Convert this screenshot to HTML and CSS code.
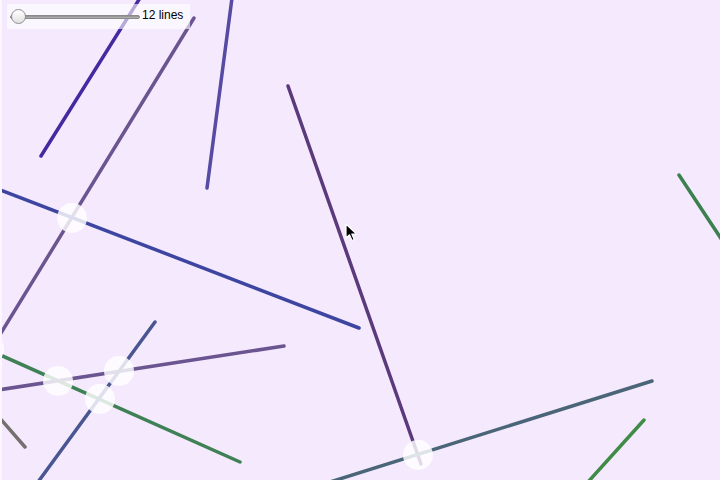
FILE: index.html
```html
<!DOCTYPE html>
<html>
<head>
<meta charset="utf-8">
<link rel="stylesheet" href="styles.css">
</head>
<body>
<div class="stage">
  <svg class="canvas" width="718" height="480" viewBox="2 0 718 480">
    <g class="lines">
      <line x1="41" y1="156" x2="140" y2="-2" stroke="#4529a0"/>
      <line x1="194" y1="18" x2="-2" y2="338" stroke="#6a5590"/>
      <line x1="232" y1="-2" x2="207" y2="188" stroke="#564aa2"/>
      <line x1="288" y1="86" x2="421" y2="464" stroke="#5b3a7c"/>
      <line x1="-2" y1="189" x2="359" y2="328" stroke="#3d45a0"/>
      <line x1="-2" y1="354" x2="240" y2="462" stroke="#3f8155"/>
      <line x1="-2" y1="390" x2="284" y2="346" stroke="#6b5590"/>
      <line x1="155" y1="322" x2="38" y2="482" stroke="#4a5692"/>
      <line x1="-2" y1="416" x2="25" y2="447" stroke="#747070"/>
      <line x1="652" y1="381" x2="330" y2="482" stroke="#4b6578"/>
      <line x1="644" y1="420" x2="588" y2="482" stroke="#3f8b47"/>
      <line x1="679" y1="175" x2="722" y2="240" stroke="#3d8050"/>
    </g>
    <g class="hits">
      <circle cx="72" cy="218" r="15"/>
      <circle cx="58" cy="381" r="15"/>
      <circle cx="119" cy="371" r="15"/>
      <circle cx="100" cy="399" r="15"/>
      <circle cx="418" cy="455" r="15"/>
      <circle cx="-11" cy="349" r="15"/>
    </g>
  </svg>
  <div class="panel">
    <div class="slider">
      <div class="track"></div>
      <div class="thumb"></div>
    </div>
    <span class="label">12 lines</span>
  </div>
  <svg class="cursor" width="14" height="20" viewBox="0 0 14 20">
    <path d="M1 1 L1 15 L4.5 11.8 L7 17.5 L9.2 16.5 L6.8 11 L11.5 11 Z" fill="#000" stroke="#fff" stroke-width="1.2" stroke-linejoin="round"/>
  </svg>
</div>
</body>
</html>
```

FILE: styles.css
```css
html, body {
  margin: 0;
  padding: 0;
}
body {
  width: 720px;
  height: 480px;
  overflow: hidden;
  background: #fbf7fd;
  font-family: "Liberation Sans", Arial, sans-serif;
}
.stage {
  position: relative;
  margin-left: 2px;
  width: 718px;
  height: 480px;
  background: #f5eafd;
}
.canvas {
  display: block;
}
.lines line {
  stroke-width: 3.5;
  stroke-linecap: round;
}
.hits circle {
  fill: #ffffff;
  fill-opacity: 0.82;
}
.panel {
  position: absolute;
  left: 5px;
  top: 4px;
  width: 183px;
  height: 25px;
  background: rgba(255, 255, 255, 0.6);
  display: flex;
  align-items: center;
  padding-left: 3px;
  box-sizing: border-box;
}
.slider {
  position: relative;
  width: 130px;
  height: 16px;
  display: flex;
  align-items: center;
  margin-top: 1px;
}
.track {
  width: 100%;
  height: 4px;
  border-radius: 2px;
  background: linear-gradient(#8c8c8c, #b8b8b8);
  border: 1px solid #8a8a8a;
  box-sizing: border-box;
}
.thumb {
  position: absolute;
  left: 1px;
  top: 0;
  width: 15px;
  height: 15px;
  border-radius: 50%;
  box-sizing: border-box;
  border: 1px solid #8d8d8d;
  background: linear-gradient(#ffffff, #e2e2e2);
}
.label {
  font-size: 12px;
  color: #000;
  margin-left: 2px;
  line-height: 1;
  margin-bottom: 3px;
}
.cursor {
  position: absolute;
  left: 343px;
  top: 223px;
}
```
